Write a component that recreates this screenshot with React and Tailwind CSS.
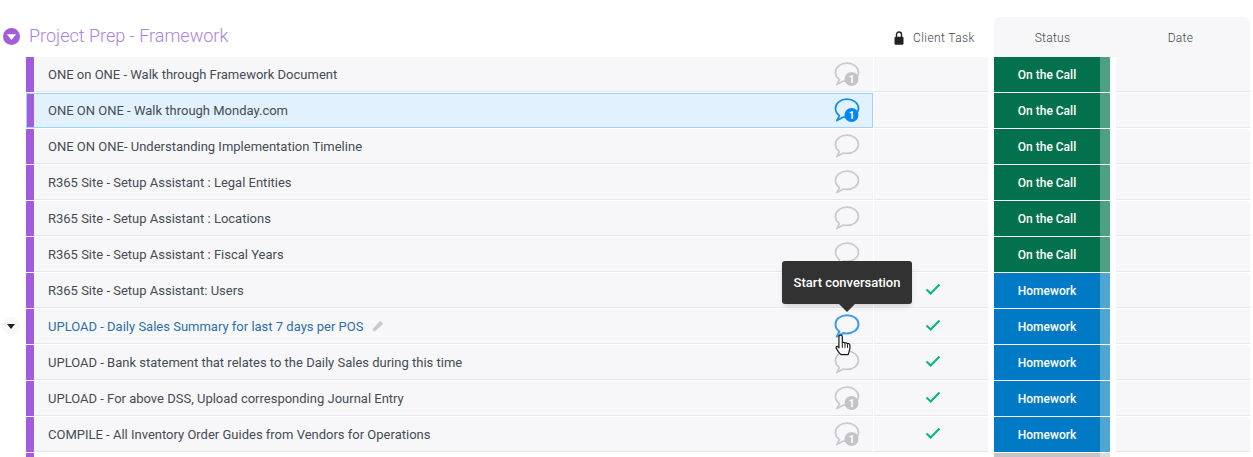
import React from "react";

const rows = [
  { t: "ONE on ONE - Walk through Framework Document", c: "badge", s: "call" },
  { t: "ONE ON ONE - Walk through Monday.com", c: "active", s: "call", sel: true },
  { t: "ONE ON ONE- Understanding Implementation Timeline", c: "empty", s: "call" },
  { t: "R365 Site - Setup Assistant : Legal Entities", c: "empty", s: "call" },
  { t: "R365 Site - Setup Assistant : Locations", c: "empty", s: "call" },
  { t: "R365 Site - Setup Assistant : Fiscal Years", c: "empty", s: "call" },
  { t: "R365 Site - Setup Assistant: Users", c: "none", s: "hw", check: true },
  { t: "UPLOAD - Daily Sales Summary for last 7 days per POS", c: "hover", s: "hw", check: true, link: true },
  { t: "UPLOAD - Bank statement that relates to the Daily Sales during this time", c: "empty", s: "hw", check: true },
  { t: "UPLOAD - For above DSS, Upload corresponding Journal Entry", c: "badge", s: "hw", check: true },
  { t: "COMPILE - All Inventory Order Guides from Vendors for Operations", c: "badge", s: "hw", check: true },
];

function Bubble({ kind }) {
  const color = kind === "active" ? "#0f8fe8" : kind === "hover" ? "#3d9cf0" : "#c9c9cd";
  const badge = kind === "badge" || kind === "active";
  const fill = kind === "active" ? "#0085ff" : "#c4c4c8";
  return (
    <svg width="26" height="24" viewBox="0 0 26 24" className="block">
      <path
        d="M5.500 17.600C3 15.900 1.500 13.300 1.500 10.300 1.500 5.100 6.600 1.200 13 1.200s11.500 3.900 11.500 9.100-5.100 9.100-11.500 9.100c-1.200 0-2.400-.1-3.500-.4L2.800 22.600z"
        fill="none"
        stroke={color}
        strokeWidth={kind === "hover" ? 2 : 1.7}
        strokeLinejoin="round"
      />
      {badge && (
        <g>
          <circle cx="17.500" cy="17" r="7" fill={fill} />
          <text x="17.500" y="20.700" textAnchor="middle" fontSize="10" fontWeight="700" fontFamily="Roboto, sans-serif" fill="#fff">1</text>
        </g>
      )}
    </svg>
  );
}

function Check() {
  return (
    <svg width="16" height="14" viewBox="0 0 16 14" className="block">
      <path d="M1.500 7.500l4.200 4L14.500 2.500" fill="none" stroke="#10b483" strokeWidth="2.200" />
    </svg>
  );
}

function Row({ r }) {
  return (
    <div className="flex h-9 shrink-0 relative">
      {!r.sel && <div className="w-2 h-[35px] bg-[#a25ddc] shrink-0" />}
      <div
        className={`h-[35px] shrink-0 flex items-center ${
          r.sel ? "w-[847px] bg-[#e1f1fe] border border-[#9fd2f7]" : "w-[839px] bg-[#f7f7fa] border-b border-[#e6e6e9]"
        }`}
      >
        {r.sel && <div className="w-[7px] self-stretch bg-[#a25ddc] shrink-0" />}
        <span className={`ml-[14px] ${r.sel ? "" : "mt-[2px]"} text-[13px] ${r.link ? "text-[#2f6ea6]" : "text-[#464b55]"}`}>{r.t}</span>
        {r.link && (
          <svg width="12" height="12" viewBox="0 0 12 12" className="ml-[9px]">
            <path d="M.500 11.500l.8-3.200L8.300.8l2.900 2.900L3.700 10.700z" fill="#c9c9cd" />
          </svg>
        )}
        <div className={`ml-auto flex items-center justify-center w-[26px] ${r.sel ? "mr-[12px]" : "mr-[13px]"} -mt-[1px]`}>
          {r.c !== "none" && <Bubble kind={r.c} />}
        </div>
      </div>
      <div className="w-px shrink-0" />
      <div className="w-[114px] h-[35px] shrink-0 bg-[#f7f7fa] border-b border-[#e6e6e9] flex items-center justify-center">
        {r.check && (
          <div className="ml-[4px] -mt-[3px]">
            <Check />
          </div>
        )}
      </div>
      <div className="w-[6px] shrink-0" />
      <div className={`w-[116px] h-[35px] shrink-0 flex text-white font-medium text-xs ${r.s === "call" ? "bg-[#03714e]" : "bg-[#007ac5]"}`}>
        <div className="w-[106px] flex items-center justify-center">{r.s === "call" ? "On the Call" : "Homework"}</div>
        <div className={`w-[10px] ${r.s === "call" ? "bg-[#4f9f82]" : "bg-[#4fa6d3]"}`} />
      </div>
      <div className="w-[6px] shrink-0" />
      <div className="w-[134px] h-[35px] shrink-0 bg-[#f7f7fa] border-b border-[#e6e6e9]" />
    </div>
  );
}

export default function App() {
  return (
    <div className="relative h-[457px] w-[1253px] overflow-hidden bg-white font-['Roboto',sans-serif]">
      <div className="flex h-[57px]">
        <div className="flex items-center self-end h-[40px] pb-[2px] pl-[3px] w-[890px]">
          <svg width="17" height="17" viewBox="0 0 17 17" className="shrink-0">
            <circle cx="8.500" cy="8.500" r="8.500" fill="#a25ddc" />
            <path d="M3.800 6.300h9.400L8.500 12z" fill="#fff" />
          </svg>
          <span className="ml-[9px] text-lg font-light text-[#a884dd]">Project Prep - Framework</span>
        </div>
        <div className="flex items-center self-end h-10 w-[104px] pt-[2px] pl-[4px] text-xs font-light text-[#414650] tracking-[0.4px]">
          <svg width="10" height="14" viewBox="0 0 10 14" className="shrink-0">
            <path d="M2.500 6.500V3.500a2.500 2.500 0 015 0v3" fill="none" stroke="#222" strokeWidth="1.400" />
            <rect x="0.500" y="5.700" width="9" height="8" rx="1.200" fill="#222" />
          </svg>
          <span className="ml-[9px]">Client Task</span>
        </div>
        <div className="flex self-end h-10 w-[256px] pt-[2px] bg-[#f7f7fa] rounded-t-md text-xs font-light text-[#414650] tracking-[0.3px]">
          <div className="w-[117px] flex items-center justify-center">Status</div>
          <div className="w-[139px] flex items-center justify-center">Date</div>
        </div>
      </div>
      <div className="flex flex-col pl-[26px]">
        {rows.map((r, i) => (
          <Row key={i} r={r} />
        ))}
        <div className="flex h-3 shrink-0">
          <div className="w-2 bg-[#a25ddc]" />
          <div className="w-[960px]" />
          <div className="w-[106px] bg-[#c4c4c4]" />
          <div className="w-[10px] bg-[#dadada]" />
        </div>
      </div>
      <div className="absolute left-[782px] top-[261px] w-[130px] h-[43px] rounded-[3px] bg-[#323232] text-white text-[13px] font-medium flex items-center justify-center shadow-md">
        Start conversation
        <div className="absolute left-[57px] -bottom-[8px] w-0 h-0 border-x-[8px] border-x-transparent border-t-[8px] border-t-[#323232]" />
      </div>
      <svg width="18" height="25" viewBox="0 0 16 22" className="absolute left-[835px] top-[333px]">
        <path
          d="M5 1.800c.9 0 1.500.6 1.500 1.500v5.200c.5-.4 1.700-.4 2.200.3.6-.4 1.800-.3 2.200.5.700-.3 2.100 0 2.300 1.200.2 1.700.1 3.800-.5 5.300l-1 3.300H5.500C4.300 18.300 1.500 14.500 1 13.300c-.4-1 .6-1.900 1.500-1.300l1 1.100V3.300C3.500 2.400 4.100 1.800 5 1.800z"
          fill="#fff"
          stroke="#1c1c1c"
          strokeWidth="1.100"
          strokeLinejoin="round"
        />
        <path d="M6.500 9v4M8.900 9.300V13M11.100 9.800V13" stroke="#1c1c1c" strokeWidth="0.900" />
      </svg>
      <div className="absolute left-[2px] top-[317px] w-[18px] h-[18px] rounded-full bg-[#f8f8f8] flex items-center justify-center">
        <div className="w-0 h-0 border-x-[4px] border-x-transparent border-t-[5px] border-t-[#222]" />
      </div>
    </div>
  );
}
